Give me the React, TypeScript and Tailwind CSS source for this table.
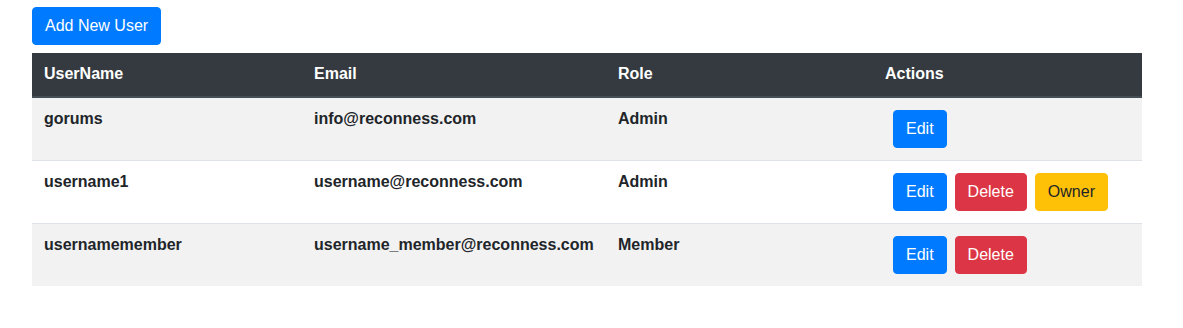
type Member = {
  name: string;
  email: string;
  role: string;
  canDelete: boolean;
  canOwn: boolean;
};

const members: Member[] = [
  { name: "gorums", email: "info@reconness.com", role: "Admin", canDelete: false, canOwn: false },
  { name: "username1", email: "username@reconness.com", role: "Admin", canDelete: true, canOwn: true },
  { name: "usernamemember", email: "username_member@reconness.com", role: "Member", canDelete: true, canOwn: false },
];

const btn = "ml-2 rounded border px-3 py-[6px] text-base leading-6";
const head = "border-b-2 border-[#454d55] px-3 pt-[9px] pb-[10px] font-bold leading-6";
const cell = "border-t border-[#dee2e6] px-3 pt-[9px] align-top font-bold leading-6";

export default function App() {
  return (
    <div className="min-h-screen bg-white font-['Liberation_Sans',Arial,sans-serif] text-base text-[#212529]">
      <div className="ml-8 w-[1110px] pt-[7px]">
        <button className="mb-2 rounded border border-[#007bff] bg-[#007bff] px-3 py-[6px] text-base leading-6 text-white">
          Add New User
        </button>
        <table className="w-full table-fixed border-collapse">
          <thead>
            <tr className="bg-[#343a40] text-left text-white">
              <th className={`w-[270px] ${head}`}>UserName</th>
              <th className={`w-[304px] ${head}`}>Email</th>
              <th className={`w-[267px] ${head}`}>Role</th>
              <th className={head}>Actions</th>
            </tr>
          </thead>
          <tbody>
            {members.map((m, i) => (
              <tr key={m.name} className={i % 2 === 0 ? "bg-[#f2f2f2]" : "bg-white"}>
                <td className={cell}>{m.name}</td>
                <td className={cell}>{m.email}</td>
                <td className={cell}>{m.role}</td>
                <td className="border-t border-[#dee2e6] px-3 py-3 align-top">
                  <div className="flex">
                    <button className={`${btn} border-[#007bff] bg-[#007bff] text-white`}>Edit</button>
                    {m.canDelete && (
                      <button className={`${btn} border-[#dc3545] bg-[#dc3545] text-white`}>Delete</button>
                    )}
                    {m.canOwn && (
                      <button className={`${btn} border-[#ffc107] bg-[#ffc107] text-[#212529]`}>Owner</button>
                    )}
                  </div>
                </td>
              </tr>
            ))}
          </tbody>
        </table>
      </div>
    </div>
  );
}
